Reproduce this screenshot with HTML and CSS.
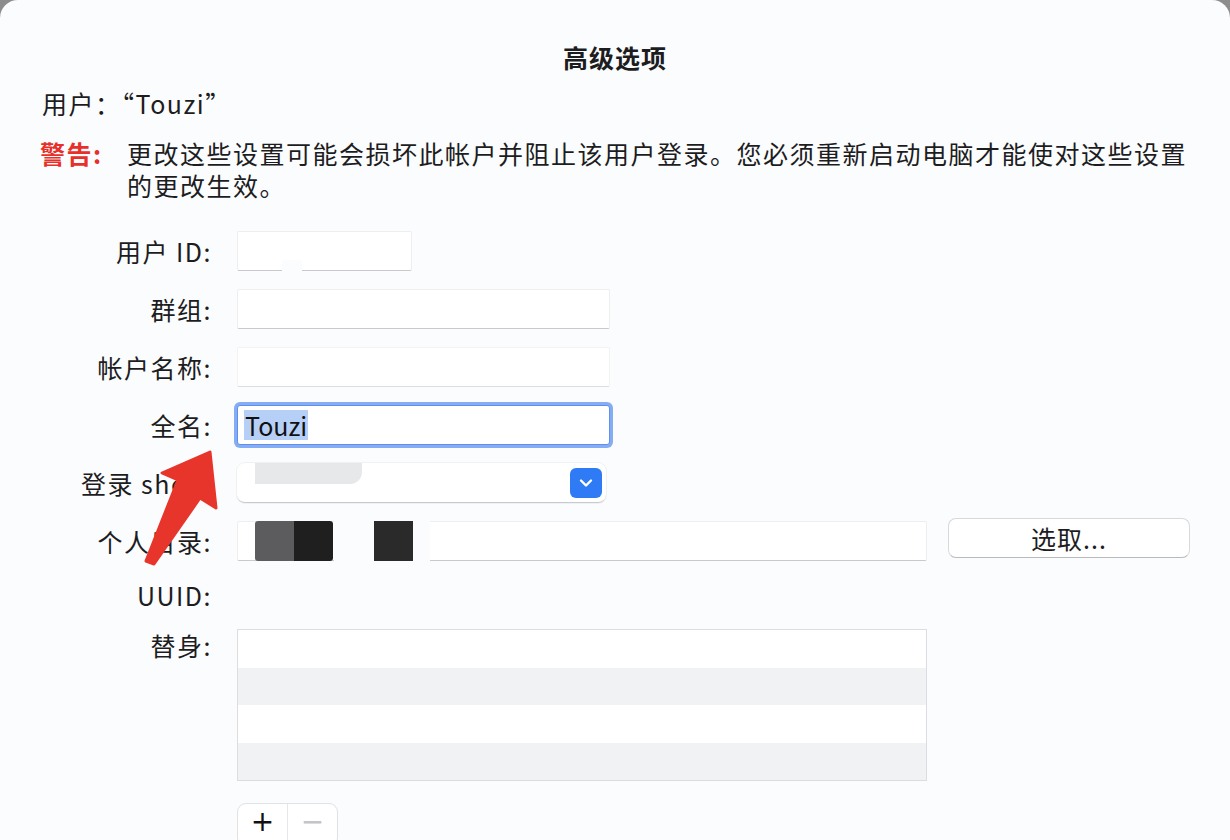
FILE: index.html
```html
<!DOCTYPE html>
<html>
<head>
    <link rel="stylesheet" href="styles.css">
</head>

<body>
    <div class="window">
        <h1 class="title">高级选项</h1>
        <p class="user-line">用户：“Touzi”</p>

        <div class="warning">
            <span class="warning-label">警告:</span>
            <p class="warning-text">更改这些设置可能会损坏此帐户并阻止该用户登录。您必须重新启动电脑才能使对这些设置的更改生效。</p>
        </div>

        <div class="form">
            <label class="row-label">用户 ID:</label>
            <div class="field field-short"><span class="patch"></span></div>

            <label class="row-label">群组:</label>
            <div class="field field-mid"></div>

            <label class="row-label">帐户名称:</label>
            <div class="field field-mid faint"></div>

            <label class="row-label">全名:</label>
            <div class="field field-mid focused"><span class="selected">Touzi</span></div>

            <label class="row-label">登录 shell:</label>
            <div class="popup">
                <span class="blur-gray"></span>
                <span class="chevron">
                    <svg width="14" height="10" viewBox="0 0 14 10"><path d="M2 2.5 L7 7.5 L12 2.5" fill="none" stroke="#fff" stroke-width="2.4" stroke-linecap="round" stroke-linejoin="round"/></svg>
                </span>
            </div>

            <label class="row-label">个人目录:</label>
            <div class="home-row">
                <div class="field field-long">
                    <span class="block block-a"></span>
                    <span class="block block-b"></span>
                    <span class="patch patch-wide"></span>
                </div>
                <button type="button" class="choose-btn">选取...</button>
            </div>

            <label class="row-label">UUID:</label>
            <div class="empty-cell"></div>

            <label class="row-label top">替身:</label>
            <div class="alias-list">
                <div class="alias-row"></div>
                <div class="alias-row odd"></div>
                <div class="alias-row"></div>
                <div class="alias-row odd"></div>
            </div>

            <span></span>
            <div class="btn-group">
                <button type="button" class="seg plus">+</button>
                <button type="button" class="seg minus">−</button>
            </div>
        </div>

        <svg class="arrow" width="100" height="130" viewBox="0 0 100 130">
            <polygon points="80,7 32,28 48,35 16,116 24,119 70,53 86,63" fill="#e8352c" stroke="#e8352c" stroke-width="3" stroke-linejoin="round"/>
        </svg>
    </div>
</body>
</html>
```

FILE: styles.css
```css
body {
    margin: 0;
    background-color: #8d8d8d;
    font-family: "Noto Sans CJK SC", "Noto Sans", sans-serif;
    color: #1d1d1f;
}

.window {
    position: relative;
    height: 840px;
    padding: 0 40px;
    box-sizing: border-box;
    background-color: #fbfcfd;
    border-radius: 18px 18px 0 0;
    overflow: hidden;
}

.title {
    margin: 0;
    padding-top: 41px;
    font-size: 25px;
    line-height: 32px;
    font-weight: bold;
    text-align: center;
    letter-spacing: 1px;
}

.user-line {
    margin: 14px 0 0 2px;
    font-size: 25px;
    line-height: 32px;
    letter-spacing: 1.5px;
}

.warning {
    margin-top: 18px;
    display: grid;
    grid-template-columns: 87px 1085px;
    font-size: 25px;
    line-height: 32px;
    letter-spacing: 1.5px;
}

.warning-label {
    color: #e8302a;
    font-weight: bold;
}

.warning-text {
    margin: 0;
}

.form {
    margin: 30px 0 0 -40px;
    display: grid;
    grid-template-columns: 212px auto;
    column-gap: 25px;
    row-gap: 18px;
    align-items: center;
}

.row-label {
    text-align: right;
    font-size: 25px;
    line-height: 32px;
    letter-spacing: 1.5px;
}

.row-label.top {
    align-self: start;
}

.field {
    position: relative;
    height: 40px;
    box-sizing: border-box;
    background-color: #fff;
    border: 1px solid #eceef0;
    border-bottom-color: #c9cacd;
    border-radius: 2px;
    display: flex;
    align-items: center;
}

.field.faint {
    border-color: #f2f3f5;
    border-bottom-color: #dcdde0;
}

.field-short {
    width: 175px;
}

.field-mid {
    width: 373px;
}

.field-long {
    width: 690px;
}

.field.focused {
    border-color: #5e90ef;
    box-shadow: 0 0 0 3px #86adf4;
    border-radius: 3px;
}

.selected {
    margin-left: 6px;
    padding: 0 1px;
    background-color: #b6cff6;
    font-size: 25px;
    line-height: 30px;
    color: #111;
}

.patch {
    position: absolute;
    left: 44px;
    bottom: -2px;
    width: 20px;
    height: 12px;
    background-color: #fbfcfd;
}

.patch-wide {
    left: 96px;
    top: -2px;
    bottom: -2px;
    width: 96px;
    height: auto;
}

.popup {
    position: relative;
    width: 369px;
    height: 40px;
    box-sizing: border-box;
    background-color: #fff;
    border-bottom: 1px solid #c9cacd;
    border-radius: 8px;
    box-shadow: 0 0 0 1px #f0f1f3;
    display: flex;
    align-items: center;
    justify-content: flex-end;
    padding-right: 4px;
}

.blur-gray {
    position: absolute;
    left: 18px;
    top: 0;
    width: 107px;
    height: 21px;
    background-color: #e7e8ea;
    border-radius: 0 0 12px 0;
}

.chevron {
    width: 32px;
    height: 30px;
    border-radius: 6px;
    background-color: #2f7bf5;
    display: flex;
    align-items: center;
    justify-content: center;
}

.home-row {
    display: flex;
    align-items: center;
    gap: 21px;
}

.block {
    position: relative;
    z-index: 1;
    height: 40px;
    border-radius: 3px;
}

.block-a {
    margin-left: 17px;
    width: 78px;
    background: linear-gradient(to right, #5c5c5e 0, #5c5c5e 50%, #1f1f20 50%, #1f1f20 100%);
}

.block-b {
    margin-left: 41px;
    width: 39px;
    background-color: #2a2a2b;
    border-radius: 0;
}

.choose-btn {
    width: 242px;
    height: 40px;
    margin: -3px 0 3px;
    border: 1px solid #d8d9dc;
    border-bottom-color: #b9babd;
    border-radius: 8px;
    background-color: #fff;
    font-family: inherit;
    font-size: 25px;
    letter-spacing: 1px;
    color: #1d1d1f;
    cursor: pointer;
}

.empty-cell {
    height: 30px;
}

.alias-list {
    width: 690px;
    border: 1px solid #dcdde0;
    box-sizing: border-box;
    background-color: #fff;
}

.alias-row {
    height: 38px;
}

.alias-row.odd {
    height: 37px;
    background-color: #f1f2f4;
}

.btn-group {
    margin-top: 4px;
    width: 101px;
    height: 44px;
    box-sizing: border-box;
    border: 1px solid #e1e2e5;
    border-radius: 9px;
    background-color: #fff;
    display: flex;
}

.seg {
    flex: 1;
    border: none;
    background: none;
    font-family: "DejaVu Sans", sans-serif;
    font-size: 28px;
    line-height: 1;
    padding: 0 0 6px;
    cursor: pointer;
}

.seg.plus {
    color: #111;
    border-right: 1px solid #e6e7ea;
}

.seg.minus {
    color: #c4c5c8;
}

.arrow {
    position: absolute;
    left: 130px;
    top: 445px;
}
```
